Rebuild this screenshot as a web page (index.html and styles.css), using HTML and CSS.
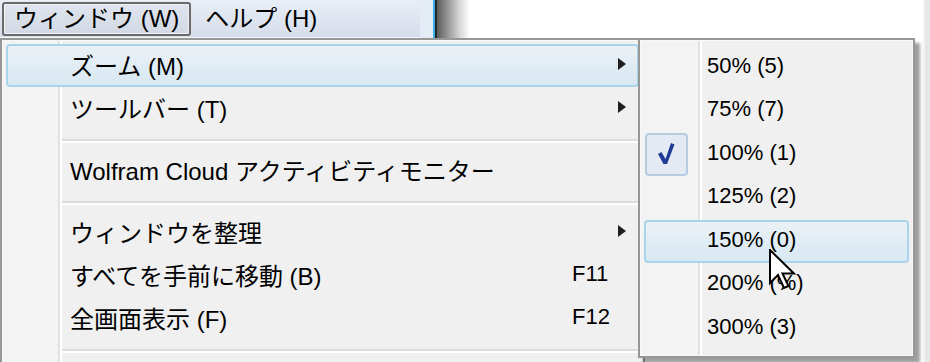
FILE: index.html
```html
<!DOCTYPE html>
<html lang="ja">
<head>
    <meta charset="UTF-8">
    <title>ウィンドウ メニュー</title>
    <link rel="stylesheet" href="styles.css">
</head>
<body>
    <div class="screen">
        <div class="desktop">
            <div class="topbar">
                <nav class="menubar">
                    <span class="menubar-item open">ウィンドウ (W)</span>
                    <span class="menubar-item">ヘルプ (H)</span>
                </nav>
                <div class="win-edge"></div>
                <div class="win-body"></div>
            </div>
        </div>
        <div class="scroll-strip"></div>

        <!-- main dropdown -->
        <div class="menu main-menu">
            <div class="item active"><span class="label">ズーム (M)</span><span class="key"></span><span class="arrow"></span></div>
            <div class="item"><span class="label">ツールバー (T)</span><span class="key"></span><span class="arrow"></span></div>
            <div class="sep"></div>
            <div class="item"><span class="label">Wolfram Cloud アクティビティモニター</span><span class="key"></span><span class="no-arrow"></span></div>
            <div class="sep"></div>
            <div class="item"><span class="label">ウィンドウを整理</span><span class="key"></span><span class="arrow"></span></div>
            <div class="item"><span class="label">すべてを手前に移動 (B)</span><span class="key">F11</span><span class="no-arrow"></span></div>
            <div class="item"><span class="label">全画面表示 (F)</span><span class="key">F12</span><span class="no-arrow"></span></div>
            <div class="sep"></div>
        </div>

        <!-- zoom submenu -->
        <div class="menu submenu">
            <div class="item"><span class="mark"></span><span class="label">50% (5)</span></div>
            <div class="item"><span class="mark"></span><span class="label">75% (7)</span></div>
            <div class="item"><span class="mark checked">
                <svg width="42" height="44" viewBox="0 0 42 44"><path d="M13 21 L16.5 19 L20.5 26 L26 10 L29.5 11.5 L22 31 L18.5 31 Z" fill="#1f3a93"/></svg>
            </span><span class="label">100% (1)</span></div>
            <div class="item"><span class="mark"></span><span class="label">125% (2)</span></div>
            <div class="item active"><span class="mark"></span><span class="label">150% (0)</span></div>
            <div class="item"><span class="mark"></span><span class="label">200% (%)</span></div>
            <div class="item"><span class="mark"></span><span class="label">300% (3)</span></div>
        </div>

        <svg class="cursor" width="28" height="42" viewBox="0 0 28 42">
            <path d="M1 1 L1 34 L9 26 L15 39 L19.5 37 L13.5 24.5 L25 24.5 Z" fill="#fff" stroke="#000" stroke-width="2" stroke-linejoin="miter"/>
        </svg>
    </div>
</body>
</html>
```

FILE: styles.css
```css
* {
    box-sizing: border-box;
}

body {
    margin: 0;
    background: #fff;
}

.screen {
    position: relative;
    display: flex;
    width: 930px;
    height: 362px;
    overflow: hidden;
    background: #fff;
    font-family: "Liberation Sans", "Noto Sans CJK JP", sans-serif;
    font-size: 24px;
    color: #000;
}

.desktop {
    flex: 1;
}

.scroll-strip {
    width: 7px;
    background: #e6e6e6;
    border-left: 2px solid #f3f3f3;
}

.topbar {
    display: flex;
    height: 38px;
}

.menubar {
    width: 420px;
    display: flex;
    align-items: center;
    gap: 2px;
    padding-left: 2px;
    background: linear-gradient(#e9eef6, #d6deeb);
    border-bottom: 1px solid #f4f6fa;
}

.menubar-item {
    height: 34px;
    line-height: 30px;
    padding: 0 10px;
    border: 2px solid transparent;
    border-radius: 3px;
    white-space: nowrap;
}

.menubar-item.open {
    border-color: #6a6a6a;
    background: linear-gradient(#dfe5ee, #d2d9e4);
    box-shadow: inset 0 0 0 1px #eef2f7;
}

.win-edge {
    width: 50px;
    background: linear-gradient(to right,
        #e4ecf6 0, #e4ecf6 13px,
        #3aaee8 13px, #3aaee8 15px,
        #262626 15px, #262626 17px,
        #5c5c5c 17px, #d8d8d8 40px, #fff 50px);
}

.win-body {
    flex: 1;
    background: #fff;
}

/* menus */

.menu {
    position: absolute;
    top: 38px;
    border: 2px solid #979797;
    box-shadow: inset 0 0 0 1px #f8f8f8;
}

.main-menu {
    left: 0;
    width: 645px;
    height: 340px;
    padding-top: 4px;
    background: linear-gradient(to right,
        #f3f3f3 0, #f3f3f3 56px,
        #e0e1e1 56px, #e0e1e1 58px,
        #fff 58px, #fff 60px,
        #f0f0f0 60px);
}

.submenu {
    left: 638px;
    width: 277px;
    height: 320px;
    padding-top: 5.5px;
    z-index: 2;
    font-size: 22px;
    background: linear-gradient(to right,
        #f3f3f3 0, #f3f3f3 58px,
        #e0e1e1 58px, #e0e1e1 60px,
        #fff 60px, #fff 62px,
        #f0f0f0 62px);
    box-shadow: inset 0 0 0 1px #f8f8f8, 5px 5px 3px rgba(0, 0, 0, 0.38);
}

.item {
    display: flex;
    align-items: center;
    height: 43px;
    margin: 0 4px;
    padding-bottom: 3px;
    border: 2px solid transparent;
    border-radius: 4px;
    white-space: nowrap;
}

.main-menu .item {
    padding: 0 11px 3px 62px;
}

.submenu .item {
    height: 43.5px;
}

.item.active {
    border-color: #a9d4e9;
    background: linear-gradient(#eaf1f5, #d8e8f2);
}

.label {
    flex: 1;
}

.key {
    width: 46px;
    font-size: 22px;
}

.arrow,
.no-arrow {
    width: 8px;
    height: 12px;
}

.arrow {
    border-left: 8px solid #1e1e1e;
    border-top: 6px solid transparent;
    border-bottom: 6px solid transparent;
}

.sep {
    height: 19px;
    margin-left: 60px;
    padding-top: 9px;
}

.sep::after {
    content: "";
    display: block;
    border-top: 2px solid #dcdcdc;
    border-bottom: 2px solid #fff;
}

.mark {
    align-self: stretch;
    width: 43px;
    margin: -2px 0 -5px -1px;
    border-radius: 4px;
}

.mark.checked {
    border: 2px solid #b8cbe2;
    background: #e3eaf4;
}

.mark.checked svg {
    display: block;
    margin: -2px 0 0 -2px;
}

.submenu .label {
    margin-left: 19px;
}

.cursor {
    position: absolute;
    left: 769px;
    top: 249px;
    z-index: 3;
}
```
